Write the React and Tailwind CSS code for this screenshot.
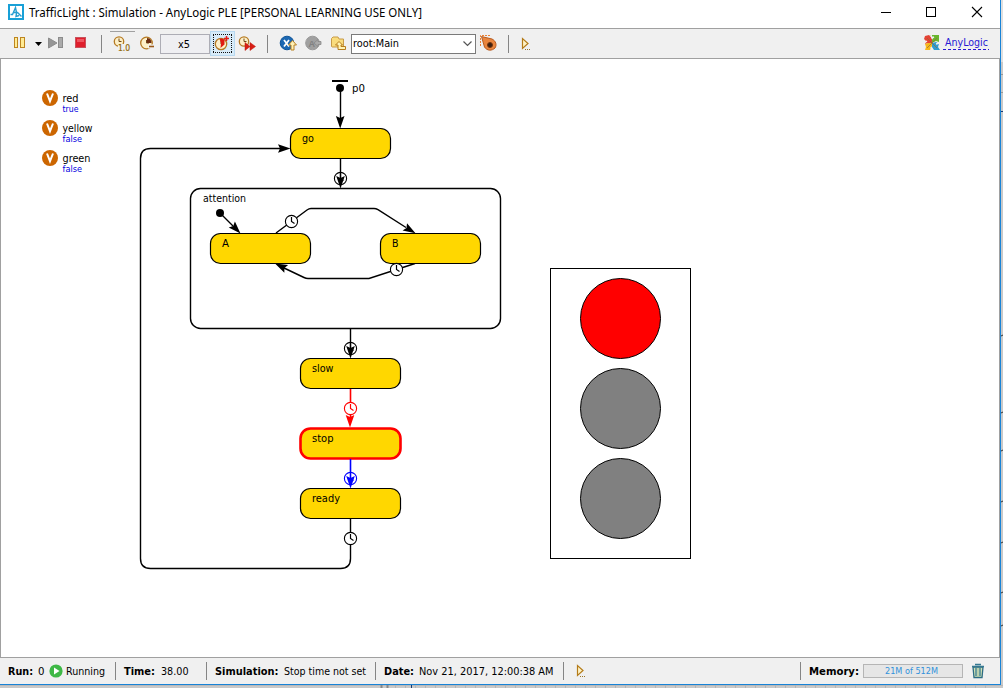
import React from "react";

const ui = "font-['DejaVu_Sans_Condensed','DejaVu_Sans',sans-serif]";

// Toolbar glyphs share one horizontal coordinate system, x being the left edge.
function Glyph({ x, w, children }) {
  return (
    <svg width={w} height="29" viewBox={`${x} 29 ${w} 29`} className="block shrink-0">
      {children}
    </svg>
  );
}

// Text fitted to a fixed advance width.
function Label({ w, children, size = 11, bold = false, fill = "#000", family = "DejaVu Sans Condensed" }) {
  return (
    <svg width={w} height="18" className="block shrink-0 overflow-visible">
      <text x="0" y="13" fontSize={size} fontFamily={`${family}, DejaVu Sans, sans-serif`} fontWeight={bold ? 700 : 400} fill={fill} textLength={w} lengthAdjust="spacingAndGlyphs">
        {children}
      </text>
    </svg>
  );
}

function SmallClock({ cx, cy, r = 4.7, fill = "#fdf0c8" }) {
  return (
    <g stroke="#b57a24" fill="none" strokeWidth="1.3">
      <circle cx={cx} cy={cy} r={r} fill={fill} />
      <path d={`M${cx} ${cy - 3}V${cy}H${cx + 2.5}`} stroke="#704818" strokeWidth="1" />
    </g>
  );
}

function Separator({ className = "" }) {
  return <div className={`w-px shrink-0 bg-[#858585] ${className}`} />;
}

function Step() {
  return (
    <g>
      <path d="M522.5 38.5V48.5L528 43.5Z" fill="#fff3c6" stroke="#b47b18" strokeWidth="1.2" />
      <path d="M525 49.5h1m1 0h1m1 0h1" stroke="#9b762c" />
    </g>
  );
}

function TitleBar() {
  return (
    <header className="flex h-7 shrink-0 items-center bg-white">
      <svg width="29" height="28" className="block shrink-0">
        <rect x="9" y="5" width="14" height="14" fill="#fff" stroke="#18a0d7" strokeWidth="2" />
        <path d="M10.500 14.500H12.500L15.500 7.500L16.500 12.500M13.500 12.500H17.500L21.500 16.500M16.500 13L16 16.500L19 15.500" fill="none" stroke="#269dd0" strokeWidth="1.4" />
      </svg>
      <div className="-mt-[3px]">
        <Label w={393} size={12} family="Noto Sans">TrafficLight : Simulation - AnyLogic PLE [PERSONAL LEARNING USE ONLY]</Label>
      </div>
      <svg width="140" height="28" viewBox="860 0 140 28" className="ml-auto block shrink-0">
        <path d="M881 12.5H891" stroke="#000" />
        <rect x="926.5" y="7.5" width="9" height="9" fill="none" stroke="#000" />
        <path d="M972 7L982 17M982 7L972 17" stroke="#000" strokeWidth="1.1" />
      </svg>
    </header>
  );
}

function Toolbar() {
  return (
    <nav className="flex h-[30px] shrink-0 items-center border-t border-[#a0a0a0] bg-[#f0f0f0]">
      <Glyph x={0} w={101}>
        <g fill="#ffeb94" stroke="#bd8520">
          <rect x="14.5" y="37.5" width="3" height="10" />
          <rect x="20.5" y="37.5" width="4" height="10" />
        </g>
        <path d="M35 42H42L38.5 46Z" fill="#000" />
        <path d="M48.5 38V48L57 43Z" fill="#969696" stroke="#8c8c8c" />
        <rect x="58.5" y="37.5" width="4" height="10" fill="#aaa" stroke="#8c8c8c" />
        <rect x="75.5" y="37.5" width="10" height="10" fill="#df1f2c" stroke="#c8525c" />
        <path d="M77 39h7v3h-7z" fill="#ef5560" />
      </Glyph>
      <Separator className="h-[18px]" />
      <Glyph x={102} w={58}>
        <path d="M110 31.5H135" stroke="#a0a0a0" />
        <SmallClock cx={119} cy={41.5} />
        <rect x="118" y="44" width="12" height="8" fill="#f0f0f0" />
        <text x="118" y="50.500" fontSize="8.500" fontFamily="DejaVu Sans Condensed" fill="#946b0e" stroke="#946b0e" strokeWidth=".2" textLength="12">1.0</text>
        <SmallClock cx={146.5} cy={43} r={5.8} />
        <path d="M147 43V38A5 5 0 0 1 151.5 43Z" fill="#6c2b12" />
        <path d="M148 46.5h8" stroke="#f0f0f0" strokeWidth="4" />
        <path d="M149 46.5h5" stroke="#9a5918" strokeWidth="1.6" />
      </Glyph>
      <div className="flex h-5 w-[50px] shrink-0 items-center justify-center border border-[#adadb5] bg-[#efeff2] pr-[3px]">
        <Label w={12}>x5</Label>
      </div>
      <div className="flex h-[25px] w-[25px] shrink-0 items-center justify-center border border-[#b8d9f0] bg-[#d7ebf8]">
        <svg width="21" height="21" viewBox="212 33 21 21" className="block">
          <path d="M213 34.5H232M213 52.5H232M213.5 35V53M231.5 35V53" fill="none" stroke="#111" strokeDasharray="1 1" />
          <SmallClock cx={221} cy={44} r={5.7} />
          <path d="M221 43L219.500 39Q222.500 37.500 224.500 40V44.500L220.500 48Z" fill="#e01912" />
          <path d="M224 38.5h5m-2.5-2.5v5" stroke="#e31b18" strokeWidth="1.5" />
        </svg>
      </div>
      <Glyph x={235} w={32}>
        <SmallClock cx={244} cy={41.5} />
        <path d="M245 42.5L250 46.5L245 50.5ZM250 42.5L255.5 46.5L250 50.5Z" fill="#d81e15" stroke="#bc180f" strokeWidth=".5" />
      </Glyph>
      <Separator className="h-[18px]" />
      <Glyph x={268} w={83}>
        <circle cx="287" cy="43" r="6.8" fill="#1c68b2" stroke="#0f5498" />
        <path d="M284 40L289 46.5M289 40L284 46.5" stroke="#fff" strokeWidth="1.8" />
        <path d="M292.5 40.5L288.5 45H291V50H294V45H296.5Z" fill="#fff1b7" stroke="#b98122" />
        <circle cx="312.5" cy="43" r="6.8" fill="#a0a0a0" stroke="#999" />
        <text x="308.5" y="46.5" fontSize="9" fontWeight="bold" fontFamily="Liberation Sans" fill="#808080">A</text>
        <path d="M314 43L318 39.5V41.5H321V44.5H318V46.5Z" fill="#aaa" stroke="#888" strokeWidth=".8" />
        <path d="M331.5 46.5V38.5L333 37H338L339 39H343.5V47H332Z" fill="#f9dc7d" stroke="#c89b48" />
        <path d="M339 41.5L335.5 45H338V49.5H345.5V46.5H341V45H342.5Z" fill="#fff4b5" stroke="#b77d1d" />
      </Glyph>
      <div className="flex h-5 w-[125px] shrink-0 items-center border border-[#7a7a7a] bg-white pl-px">
        <div className="-mt-[2px]"><Label w={46}>root:Main</Label></div>
        <svg width="11" height="8" className="ml-auto mr-[2px] block"><path d="M1.5 1.5L5.5 5.5L9.5 1.5" fill="none" stroke="#555" strokeWidth="1.2" /></svg>
      </div>
      <Glyph x={476} w={32}>
        <path d="M480.5 46V35.5H491" fill="none" stroke="#eb8135" strokeDasharray="2 1" />
        <path d="M481.500 36.500L492 39C496 41 497 45 495 48C492 51 487 51 484.500 47Z" fill="#e9853e" stroke="#b75b20" />
        <circle cx="490" cy="45" r="2.500" fill="#3b2013" stroke="#753610" />
      </Glyph>
      <Separator className="h-[18px]" />
      <Glyph x={509} w={30}><Step /></Glyph>
      <div className="ml-auto flex items-center pr-[11px]">
        <Glyph x={922} w={23}>
          <g transform="translate(924 35)">
            <path d="M1 1L5 0L8 3V8H4L1 9L2 6L0 4Z" fill="#e44335" />
            <path d="M6 0H15V7L12 6L8 8V5L9 3Z" fill="#69b52e" />
            <path d="M1 9L4 8H8V11L6 15H1L2 12Z" fill="#f7b81b" />
            <path d="M8 8L12 7L15 9L14 12L16 15H10L8 12Z" fill="#2f9bd1" />
            <path d="M0 8L3 6M7 0L8 3L10 2M16 8L12 9M8 16L7 12" stroke="#f0f0f0" strokeWidth="1.500" fill="none" />
            <path d="M3 3L13 13M13 3L3 13" stroke="#8e6a35" strokeWidth=".7" />
          </g>
        </Glyph>
        <div className="relative -mt-[3px] h-[18px] w-[44px]">
          <Label w={43} fill="#2718d4">AnyLogic</Label>
          <svg width="46" height="1" className="absolute -left-[2px] top-[16px] block"><path d="M0 .5H46" stroke="#2718d4" strokeDasharray="3 2" /></svg>
        </div>
      </div>
    </nav>
  );
}

function Arrow({ x, y, angle, color = "#000" }) {
  return <path transform={`translate(${x} ${y}) rotate(${angle})`} d="M0 0L-12.500 -4.300L-10.500 0L-12.500 4.300Z" fill={color} />;
}

function Timer({ x, y, color = "#000" }) {
  return (
    <g fill="none" stroke={color}>
      <circle cx={x} cy={y} r="6.1" fill="#fff" strokeWidth="1.1" />
      <path d={`M${x} ${y - 4.5}V${y}L${x + 3} ${y + 2}`} strokeWidth="1.2" />
    </g>
  );
}

function State({ x, y, name, w, active = false }) {
  return (
    <g>
      <rect x={x + 0.5} y={y + 0.5} width="100" height="30" rx="10" fill="#ffd700" stroke={active ? "#f00" : "#000"} strokeWidth={active ? 2.6 : 1.2} />
      <Name x={x + 12} y={y + 14} w={w}>{name}</Name>
    </g>
  );
}

function Name({ x, y, w, size = 11, fill = "#000", children }) {
  return <text x={x} y={y} fontSize={size} fontFamily="DejaVu Sans Condensed, DejaVu Sans, sans-serif" fill={fill} textLength={w} lengthAdjust="spacingAndGlyphs">{children}</text>;
}

const variables = [
  { name: "red", value: "true", y: 98, nw: 16, vw: 16 },
  { name: "yellow", value: "false", y: 128, nw: 30, vw: 19.5 },
  { name: "green", value: "false", y: 158, nw: 28, vw: 19.5 },
];

function Model() {
  return (
    <main className="h-[600px] shrink-0 border border-[#a0a0a0] bg-white">
      <svg width="998" height="598" viewBox="1 59 998 598" className="block">
        {variables.map((v) => (
          <g key={v.name}>
            <circle cx="50" cy={v.y} r="8" fill="#cc6600" />
            <path d={`M47 ${v.y - 4.5}L50 ${v.y + 3.2}L53 ${v.y - 4.5}`} fill="none" stroke="#fff" strokeWidth="2" />
            <Name x={62.5} y={v.y + 4} w={v.nw}>{v.name}</Name>
            <Name x={62.5} y={v.y + 14} w={v.vw} size={9} fill="#0000e0">{v.value}</Name>
          </g>
        ))}
        <g fill="none" stroke="#000" strokeWidth="1.4">
          <path d="M332 81H348" strokeWidth="2" />
          <path d="M340.5 88V120M340.5 159V180M350.5 328V350" />
          <path d="M350.5 518V558.5Q350.5 568.5 340.5 568.5H150.5Q140.5 568.5 140.5 558.5V158.5Q140.5 148.5 150.5 148.5H282" />
          <rect x="190.5" y="188.5" width="310" height="140" rx="10" />
          <path d="M220 213L233 226M276 233L307 210Q309 208.500 311 208.500H374Q376 208.500 378 209.700L406 227.500M415 263.500L369 278.500H308Q306 278.500 304 277.500L283 267.500" />
        </g>
        <circle cx="340" cy="88" r="4" />
        <circle cx="220" cy="213" r="4" />
        <Name x={352} y={92} w={13}>p0</Name>
        <Name x={203} y={202} w={43}>attention</Name>
        <State x={290} y={128} name="go" w={12} />
        <State x={210} y={233} name="A" w={7} />
        <State x={380} y={233} name="B" w={6.5} />
        <State x={300} y={358} name="slow" w={21.5} />
        <path d="M350.5 389V420" stroke="#f00" strokeWidth="1.6" />
        <State x={300} y={428} name="stop" w={21.5} active />
        <path d="M350.5 459V482" stroke="#00f" strokeWidth="1.6" />
        <State x={300} y={488} name="ready" w={28} />
        <Timer x={340.5} y={178.5} />
        <Timer x={291.5} y={221.5} />
        <Timer x={396.5} y={269.500} />
        <Timer x={350.5} y={348.5} />
        <Timer x={350.5} y={408.5} color="#f00" />
        <Timer x={350.5} y={478.5} color="#00f" />
        <Timer x={350.5} y={538.5} />
        <path d="M340.5 172V181M350.5 342V351" stroke="#000" strokeWidth="1.4" />
        <path d="M350.5 472V481" stroke="#00f" strokeWidth="1.4" />
        <Arrow x={340.2} y={128.5} angle={90} />
        <Arrow x={290.5} y={148.5} angle={0} />
        <Arrow x={340.5} y={188.5} angle={90} />
        <Arrow x={240.5} y={233.5} angle={46} />
        <Arrow x={415.5} y={233.3} angle={31} />
        <Arrow x={275} y={263.5} angle={206} />
        <Arrow x={350.5} y={358.5} angle={90} />
        <Arrow x={350} y={427.500} angle={90} color="#f00" />
        <Arrow x={350.5} y={488.5} angle={90} color="#00f" />
        <rect x="550.5" y="268.500" width="140" height="290" fill="#fff" stroke="#000" />
        <g stroke="#000" fill="#808080">
          <circle cx="620.5" cy="318.500" r="40" fill="#f00" />
          <circle cx="620.5" cy="408.500" r="40" />
          <circle cx="620.5" cy="498.500" r="40" />
        </g>
      </svg>
    </main>
  );
}

function StatusBar() {
  return (
    <footer className="flex h-[26px] shrink-0 items-center bg-[#f0f0f0] pl-2">
      <Label w={25} bold>Run:</Label>
      <div className="ml-[5px]"><Label w={6.5}>0</Label></div>
      <svg width="14" height="14" className="ml-1 block shrink-0"><circle cx="7" cy="7" r="6.6" fill="#3eb846" /><path d="M5 3.5V10.500L10.500 7Z" fill="#fff" /></svg>
      <div className="ml-[3.5px] w-[49px]"><Label w={39}>Running</Label></div>
      <Separator className="h-[18px]" />
      <div className="ml-2"><Label w={31} bold>Time:</Label></div>
      <div className="ml-[6px] w-[45px]"><Label w={27.500}>38.00</Label></div>
      <Separator className="h-[18px]" />
      <div className="ml-2"><Label w={63.5} bold>Simulation:</Label></div>
      <div className="ml-[5px] w-[91.5px]"><Label w={82}>Stop time not set</Label></div>
      <Separator className="h-[18px]" />
      <div className="ml-2"><Label w={30} bold>Date:</Label></div>
      <div className="ml-[5px] w-[144px]"><Label w={134.500}>Nov 21, 2017, 12:00:38 AM</Label></div>
      <Separator className="h-[18px]" />
      <svg width="30" height="26" viewBox="509 31 30 26" className="block shrink-0"><Step /></svg>
      <div className="ml-auto"><Separator className="h-[18px]" /></div>
      <div className="ml-2"><Label w={50} bold>Memory:</Label></div>
      <div className="ml-1 flex h-[14px] w-[100px] items-center justify-center border border-[#b5b5b5] bg-[#e6e6e6]">
        <div className="-mt-[3px] mr-1"><Label w={53} size={8} fill="#3192dc" family="DejaVu Sans">21M of 512M</Label></div>
      </div>
      <svg width="16" height="18" className="ml-[7px] mr-[14px] block shrink-0">
        <path d="M3 5L4 15.5H12L13 5Z" fill="#d3e2b4" stroke="#2b6b83" strokeWidth="1.3" />
        <path d="M2 4.500H14M5 2.500H11M6 6V14M10 6V14" fill="none" stroke="#347891" strokeWidth="1.3" />
        <path d="M8 6V14" stroke="#8db0a4" strokeWidth=".7" />
      </svg>
    </footer>
  );
}

const edgeTicks = [125, 335, 412, 450, 501, 542, 592, 625];

export default function App() {
  return (
    <div className={`h-[688px] w-[1003px] overflow-hidden bg-[#c9c9c9] text-[11px] ${ui}`}>
      <div className="flex h-[685px]">
        <div className="flex w-[1001px] shrink-0 flex-col border-b border-r border-[#1883d7]">
          <TitleBar />
          <Toolbar />
          <Model />
          <StatusBar />
        </div>
        <svg width="2" height="685" className="block shrink-0">
          <rect width="2" height="62" fill="#dfdfdf" />
          <path d="M0 74.500H2M0 92.500H2" stroke="#999" />
          <path d="M0 111.500H2" stroke="#153b75" />
          {edgeTicks.slice(1).map((y) => <path key={y} d={`M0 ${y + 1}L2 ${y}`} stroke="#333" />)}
        </svg>
      </div>
      <svg width="1003" height="3" className="block">
        <path d="M0 0H1003" stroke="#aaa" />
        {Array.from({ length: 60 }, (_, i) => <path key={i} d={`M${395 + i * 10}.5 0V3`} stroke="#b5b5b5" />)}
        <path d="M381.500 0V3M387.500 0V3" stroke="#888" strokeWidth="2" />
        <path d="M411.500 0V3" stroke="#153b75" />
      </svg>
    </div>
  );
}
